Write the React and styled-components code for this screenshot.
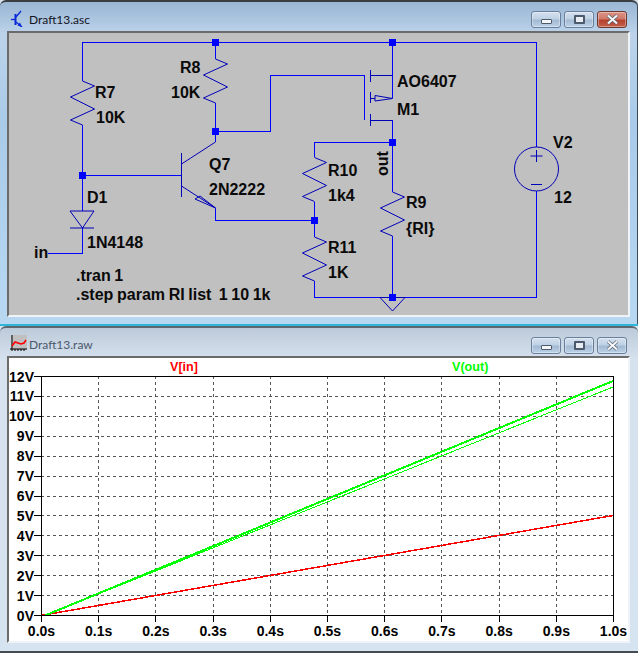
import React from "react";
import styled, { createGlobalStyle } from "styled-components";

const GlobalStyle = createGlobalStyle`
  html, body {
    margin: 0;
    padding: 0;
    background: #d6e3f0;
  }
`;

const Desktop = styled.div`
  width: 638px;
  height: 653px;
  display: flex;
  flex-direction: column;
  overflow: hidden;
`;

const Window = styled.div`
  box-sizing: border-box;
  height: ${props => props.$height}px;
  display: flex;
  flex-direction: column;
  padding: 0 8px ${props => props.$bottom}px 7px;
  background: ${props =>
    props.$active
      ? "linear-gradient(#9ab6d4 0, #bcd3ea 32px, #a9cbe9 120px, #b8d8f2 100%)"
      : "linear-gradient(#bdcad9 0, #d6e2ee 32px, #d6e3f0 100%)"};
  border-top: 2px solid ${props => (props.$active ? "#3c3f42" : "#5d6770")};
  border-bottom: 2px solid ${props => (props.$active ? "#30b4d8" : "#444a50")};
  border-radius: 6px 6px 0 0;
  box-shadow: ${props => (props.$active ? "inset -1px 0 0 #3c4a55" : "none")};
`;

const TitleBar = styled.div`
  height: ${props => props.$height}px;
  flex: none;
  display: flex;
  align-items: flex-start;
  padding-left: 3px;
`;

const TitleIcon = styled.svg`
  width: 17px;
  height: 17px;
  flex: none;
  margin-top: ${props => props.$top}px;
`;

const Title = styled.span`
  font-family: Lato, "Noto Sans", sans-serif;
  font-size: 12px;
  line-height: 16px;
  margin-left: 2px;
  margin-top: ${props => props.$top}px;
  color: ${props => (props.$active ? "#14141e" : "#4a586c")};
`;

const Controls = styled.div`
  margin-left: auto;
  margin-top: ${props => props.$top}px;
  margin-right: 3px;
  display: flex;
  gap: 3px;
`;

const CaptionButton = styled.div`
  box-sizing: border-box;
  width: 30px;
  height: 17px;
  display: flex;
  align-items: center;
  justify-content: center;
  border: 1px solid ${props => (props.$close ? "#6e3a30" : "#6a7f9c")};
  border-radius: 3px;
  background: ${props =>
    props.$close
      ? "linear-gradient(#dc9284 0, #d07a6a 45%, #b5402c 55%, #c4604c 100%)"
      : "linear-gradient(#d4e1ef 0, #bfd1e4 45%, #a3bad3 55%, #bcd2e8 100%)"};
  box-shadow: inset 0 0 0 1px rgba(255, 255, 255, 0.35);
`;

const MinGlyph = styled.span`
  box-sizing: border-box;
  width: 11px;
  height: 5px;
  margin-top: 4px;
  background: #f4f6f8;
  border: 1px solid #4c5a6c;
  border-radius: 1px;
`;

const MaxGlyph = styled.span`
  box-sizing: border-box;
  width: 11px;
  height: 9px;
  background: #e8edf3;
  border: 2px solid #4c5a6c;
  border-radius: 1px;
`;

const CloseGlyph = styled.svg`
  width: 13px;
  height: 11px;
`;

const Client = styled.div`
  flex: 1;
  min-height: 0;
  border-style: solid;
  border-width: 2px;
  border-color: #6b6b6b #f0f4f8 #f0f4f8 #6b6b6b;
  background: ${props => props.$bg};
`;

const Canvas = styled.svg`
  display: block;
  width: 619px;
  height: ${props => props.$height}px;
`;

const Wire = styled.polyline`
  fill: none;
  stroke: #0000ff;
  stroke-width: 1;
  shape-rendering: crispEdges;
`;

const Part = styled.polyline`
  fill: none;
  stroke: #0000b8;
  stroke-width: 1;
`;

const Node = styled.rect`
  fill: #0000ff;
  shape-rendering: crispEdges;
`;

const Label = styled.text`
  font-family: "Liberation Sans", Arial, sans-serif;
  font-weight: 700;
  font-size: 16px;
  fill: #0a0a0a;
  word-spacing: ${props => (props.$tight ? "-0.8px" : "0")};
`;

const AxisLabel = styled.text`
  font-family: "Liberation Sans", Arial, sans-serif;
  font-weight: 700;
  font-size: 14px;
  fill: #000;
  text-anchor: ${props => props.$anchor};
`;

const TraceName = styled.text`
  font-family: "Liberation Sans", Arial, sans-serif;
  font-weight: 700;
  font-size: 12.6px;
  fill: ${props => props.$color};
`;

const GridLine = styled.line`
  stroke: #555;
  stroke-width: 1;
  stroke-dasharray: 3 3;
  shape-rendering: crispEdges;
`;

const AxisLine = styled.line`
  stroke: #000;
  stroke-width: 1;
  shape-rendering: crispEdges;
`;

const Trace = styled.line`
  stroke: ${props => props.$color};
  stroke-width: ${props => props.$width};
  shape-rendering: crispEdges;
`;

const WIRES = [
  "82.5,81 82.5,42.5 536.5,42.5 536.5,147",
  "215.5,42 215.5,59",
  "215.5,103 215.5,142",
  "215.5,131.5 270.5,131.5 270.5,75.5 364.5,75.5 364.5,120",
  "392.5,42 392.5,98",
  "392.5,120 392.5,192",
  "314.5,157 314.5,142.5 392.5,142.5",
  "82.5,125 82.5,211",
  "82.5,175.5 181,175.5",
  "82.5,228 82.5,253.5 48,253.5",
  "215.5,208 215.5,220.5 314.5,220.5",
  "314.5,202 314.5,237",
  "314.5,281 314.5,297.5 536.5,297.5 536.5,191",
  "392.5,236 392.5,297",
];

// zigzag of a resistor, top lead at y
const resistor = (x, y) =>
  [
    [x, y],
    [x + 12, y + 5],
    [x - 12, y + 16],
    [x + 12, y + 28],
    [x - 12, y + 39],
    [x, y + 44],
  ]
    .map(p => p.join(","))
    .join(" ");

const RESISTORS = [
  [82.5, 81],
  [215.5, 59],
  [314.5, 157.5],
  [314.5, 237],
  [392.5, 192],
];

const PARTS = [
  // diode
  "70,211 94,211 82.5,228 70,211",
  "70,228 94,228",
  // npn
  "181.5,153 181.5,197",
  "181.5,164 215.5,142",
  "181.5,186 215.5,208",
  "195,199 200,196 215.5,208 195,199",
  // mosfet
  "370.5,70 370.5,82",
  "370.5,92 370.5,103",
  "370.5,114 370.5,126",
  "370.5,75.5 392.5,75.5",
  "370.5,98.5 375,98.5",
  "370.5,120.5 392.5,120.5",
  "375,95.5 375,101 392.5,98.5 375,95.5",
  // ground
  "380,297.5 405,297.5 392.5,311 380,297.5",
  // source plus and minus
  "530.5,156 542.5,156",
  "536.5,150 536.5,162",
  "531,184.5 542,184.5",
];

const NODES = [
  [215, 42],
  [392, 42],
  [215, 131],
  [82, 175],
  [392, 142],
  [314, 220],
  [392, 297],
];

const LABELS = [
  ["R7", 95, 98],
  ["10K", 96, 123],
  ["R8", 180, 73],
  ["10K", 171, 98],
  ["Q7", 209, 170],
  ["2N2222", 209, 195],
  ["D1", 87, 203],
  ["1N4148", 87, 248],
  ["in", 34, 258],
  [".tran 1", 76, 281, true],
  [".step param RI list  1 10 1k", 76, 300, true],
  ["AO6407", 397, 87],
  ["M1", 397, 115],
  ["R10", 328, 176],
  ["1k4", 328, 201],
  ["R11", 328, 253],
  ["1K", 328, 278],
  ["R9", 406, 208],
  ["{RI}", 406, 234],
  ["V2", 553, 148],
  ["12", 554, 203],
];

const PLOT = { left: 41, right: 613, top: 376, bottom: 615 };
const yAt = v => PLOT.bottom + 0.5 - (v * (PLOT.bottom - PLOT.top)) / 12;
const xAt = i => PLOT.left + 0.5 + (i * (PLOT.right - PLOT.left)) / 10;
const VOLTS = Array.from({ length: 13 }, (_, i) => i);
const TIMES = Array.from({ length: 11 }, (_, i) => i);

const Schematic = () => (
  <Canvas $height={283} viewBox="9 33 619 283">
    {WIRES.map(points => (
      <Wire key={points} points={points} />
    ))}
    {RESISTORS.map(([x, y]) => (
      <Part key={`${x}${y}`} points={resistor(x, y)} />
    ))}
    {PARTS.map(points => (
      <Part key={points} points={points} />
    ))}
    <circle cx="536.5" cy="169" r="22" fill="none" stroke="#0000b8" />
    {NODES.map(([x, y]) => (
      <Node key={`${x}${y}`} x={x - 3} y={y - 3} width="7" height="7" />
    ))}
    {LABELS.map(([text, x, y, tight]) => (
      <Label key={`${text}${x}${y}`} x={x} y={y} $tight={tight} xmlSpace="preserve">
        {text}
      </Label>
    ))}
    <Label x={0} y={0} transform="translate(388 176) rotate(-90)">
      out
    </Label>
  </Canvas>
);

const Plot = () => (
  <Canvas $height={282} viewBox="9 358 619 282">
    <TraceName $color="#ff0000" x={170} y={371}>
      V[in]
    </TraceName>
    <TraceName $color="#00ff00" x={452} y={371}>
      V(out)
    </TraceName>
    {VOLTS.slice(1, 12).map(v => (
      <GridLine key={v} x1={PLOT.left} x2={PLOT.right} y1={yAt(v)} y2={yAt(v)} />
    ))}
    {TIMES.slice(1, 10).map(i => (
      <GridLine key={i} x1={xAt(i)} x2={xAt(i)} y1={PLOT.top} y2={PLOT.bottom} />
    ))}
    <Trace $color="#ff0000" $width={1.5} x1={41} y1={615.5} x2={613} y2={515.5} />
    <Trace $color="#00ff00" $width={1} x1={45} y1={615.5} x2={613} y2={387} />
    <Trace $color="#00ff00" $width={2} x1={45} y1={615.5} x2={613} y2={381} />
    <AxisLine x1={PLOT.left + 0.5} x2={PLOT.left + 0.5} y1={PLOT.top} y2={PLOT.bottom} />
    <AxisLine x1={PLOT.right + 0.5} x2={PLOT.right + 0.5} y1={PLOT.top} y2={PLOT.bottom} />
    <AxisLine x1={PLOT.left} x2={PLOT.right} y1={PLOT.top + 0.5} y2={PLOT.top + 0.5} />
    <AxisLine x1={PLOT.left} x2={PLOT.right} y1={PLOT.bottom + 0.5} y2={PLOT.bottom + 0.5} />
    {VOLTS.map(v => (
      <g key={v}>
        <AxisLine x1={34} x2={PLOT.left} y1={yAt(v)} y2={yAt(v)} />
        <AxisLabel $anchor="end" x={34} y={yAt(v) + 5}>
          {v}V
        </AxisLabel>
      </g>
    ))}
    {TIMES.map(i => (
      <g key={i}>
        <AxisLine x1={xAt(i)} x2={xAt(i)} y1={PLOT.bottom} y2={622} />
        <AxisLabel $anchor="middle" x={xAt(i)} y={636}>
          {(i / 10).toFixed(1)}s
        </AxisLabel>
      </g>
    ))}
  </Canvas>
);

const TransistorIcon = () => (
  <TitleIcon $top={8} viewBox="0 0 17 17">
    <g fill="none" stroke="#0a28d8" strokeWidth="1.3">
      <path d="M5.5 4v11" strokeWidth="2" />
      <path d="M1 9.5h4" />
      <path d="M6 7l5-6" />
      <path d="M6 12l6 5" />
    </g>
    <path d="M12 17l-4.5-1.5 2.5-3z" fill="#0a28d8" />
  </TitleIcon>
);

const PlotIcon = () => (
  <TitleIcon $top={7} viewBox="0 0 17 17">
    <rect x="1" y="0" width="16" height="15" fill="#c0c0c0" />
    <path d="M2 0v16M0 14h17M5 14v2M8 14v2M11 14v2M14 14v2" stroke="#000" fill="none" />
    <path d="M2 11l3-4 3 1 3 1 3-1 2-3" stroke="#f00" strokeWidth="1.6" fill="none" />
  </TitleIcon>
);

const WindowControls = ({ active, top }) => (
  <Controls $top={top}>
    <CaptionButton>
      <MinGlyph />
    </CaptionButton>
    <CaptionButton>
      <MaxGlyph />
    </CaptionButton>
    <CaptionButton $close={active}>
      <CloseGlyph viewBox="0 0 13 11">
        <path d="M2 1.5l9 8M11 1.5l-9 8" stroke="#4c5a6c" strokeWidth="3.4" />
        <path d="M2 1.5l9 8M11 1.5l-9 8" stroke="#f6f6f6" strokeWidth="2.2" />
      </CloseGlyph>
    </CaptionButton>
  </Controls>
);

const App = () => (
  <Desktop>
    <GlobalStyle />
    <Window $active $height={326} $bottom={7}>
      <TitleBar $height={29}>
        <TransistorIcon />
        <Title $active $top={10}>
          Draft13.asc
        </Title>
        <WindowControls active top={9} />
      </TitleBar>
      <Client $bg="#c0c0c0">
        <Schematic />
      </Client>
    </Window>
    <Window $height={327} $bottom={8}>
      <TitleBar $height={28}>
        <PlotIcon />
        <Title $top={9}>Draft13.raw</Title>
        <WindowControls top={9} />
      </TitleBar>
      <Client $bg="#ffffff">
        <Plot />
      </Client>
    </Window>
  </Desktop>
);

export default App;
